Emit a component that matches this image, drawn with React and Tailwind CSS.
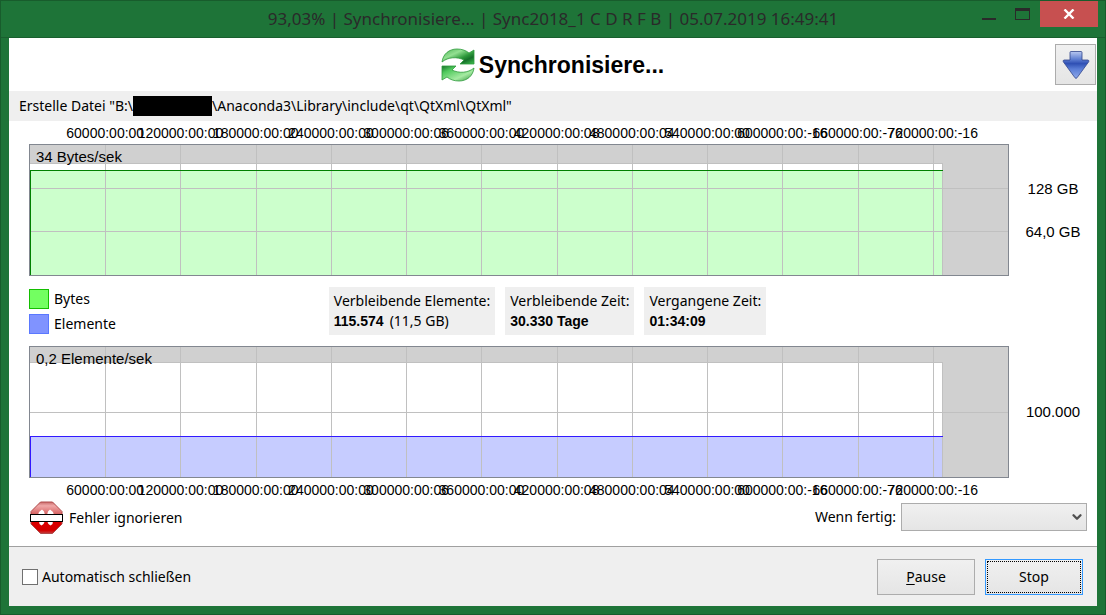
import { ChevronDown } from "lucide-react";

const ticks = [
  "60000:00:00",
  "120000:00:00",
  "180000:00:00",
  "240000:00:00",
  "300000:00:06",
  "360000:00:00",
  "420000:00:08",
  "480000:00:04",
  "540000:00:00",
  "600000:00:-16",
  "660000:00:-76",
  "720000:00:-16",
];

const infos = [
  { label: "Verbleibende Elemente:", value: "115.574", extra: "(11,5 GB)" },
  { label: "Verbleibende Zeit:", value: "30.330 Tage" },
  { label: "Vergangene Zeit:", value: "01:34:09" },
];

const tickX = (idx) => `${((idx + 1) * 100) / 13}%`;
const PROGRESS = "93.3%";

function SyncIcon() {
  return (
    <svg className="w-[34px] h-[34px]" viewBox="0 0 34 34" aria-hidden="true">
      <defs>
        <linearGradient id="syncTop" x1="0" y1="0" x2="1" y2="1">
          <stop offset="0" stopColor="#48b050" />
          <stop offset="0.35" stopColor="#93e092" />
          <stop offset="0.6" stopColor="#2f9a3c" />
          <stop offset="0.75" stopColor="#17702a" />
          <stop offset="1" stopColor="#3fc350" />
        </linearGradient>
        <linearGradient id="syncBottom" x1="0" y1="0" x2="1" y2="1">
          <stop offset="0" stopColor="#17702a" />
          <stop offset="0.25" stopColor="#4fc95c" />
          <stop offset="0.65" stopColor="#a5eaa2" />
          <stop offset="1" stopColor="#2c9138" />
        </linearGradient>
      </defs>
      <path
        d="M1 14C2 6 8 1 16 1c5 0 9 1.500 12 4l5-3v14H19l4-4C16 8.500 7 9 1 14z"
        fill="url(#syncTop)"
        stroke="#2f9a3c"
        strokeWidth="0.8"
      />
      <path
        d="M33 20C32 28 26 33 18 33c-5 0-9-1.500-12-4l-5 3V18h14l-4 4C18 25.500 27 25 33 20z"
        fill="url(#syncBottom)"
        stroke="#2f9a3c"
        strokeWidth="0.8"
      />
    </svg>
  );
}

function ArrowIcon() {
  return (
    <svg className="w-7 h-7" viewBox="0 0 28 28" aria-hidden="true">
      <defs>
        <linearGradient id="arrow" x1="0" y1="0" x2="0" y2="1">
          <stop offset="0" stopColor="#b9c8f0" />
          <stop offset="0.3" stopColor="#5b7bd0" />
          <stop offset="0.45" stopColor="#2f50b4" />
          <stop offset="0.65" stopColor="#5a7dd6" />
          <stop offset="1" stopColor="#8ea9ea" />
        </linearGradient>
      </defs>
      <path
        d="M9 .5h10q1 0 1 1V9h6q1.500.5.700 1.800L15 26.800q-1 1.200-2 0L1.300 10.800Q.5 9.500 2 9h6V1.500q0-1 1-1z"
        fill="url(#arrow)"
        stroke="#31458c"
        strokeWidth="0.8"
      />
    </svg>
  );
}

function IgnoreIcon() {
  return (
    <svg className="w-[34px] h-[34px]" viewBox="0 0 34 34" aria-hidden="true">
      <defs>
        <linearGradient id="stopSign" x1="0" y1="0" x2="0" y2="1">
          <stop offset="0" stopColor="#c96a6a" />
          <stop offset="0.12" stopColor="#f0a8a8" />
          <stop offset="0.45" stopColor="#d05050" />
          <stop offset="0.65" stopColor="#dc0000" />
          <stop offset="0.9" stopColor="#d40000" />
          <stop offset="1" stopColor="#c04040" />
        </linearGradient>
      </defs>
      <path
        d="M11.500 1h12l9.500 9.500V23l-9.500 9.500h-12L2 23V10.500z"
        fill="url(#stopSign)"
        stroke="#b04a4a"
        strokeWidth="1"
      />
      <g fill="#fff">
        <path d="M9 14l1-3 3-2.500 2 2 1 3.500zM18 14l1-3.500 2-2 3 2.500 1 3z" />
        <path d="M10 20h6l-1.500 3-2 1.500-2-1.500zM18 20h6l-.5 3-2 1.500-2-1.500z" />
      </g>
      <rect x="1.500" y="13.500" width="32" height="7" fill="#fff" stroke="#000" strokeWidth="1" />
    </svg>
  );
}

function TimeAxis() {
  return (
    <svg className="block w-full h-[23px] px-px overflow-visible" fontSize="14" fill="#000">
      {ticks.map((tick, idx) => (
        <text key={idx} x={tickX(idx)} y="17" textAnchor="middle">
          {tick}
        </text>
      ))}
    </svg>
  );
}

function Chart({ title, top, level, gridLines, fill, stroke }) {
  return (
    <div className="h-[132px] border border-[#828790] bg-[#d0d0d0]">
      <svg className="block w-full h-[130px]" shapeRendering="crispEdges">
        <rect x="0" y={top} width={PROGRESS} height={130 - top} fill="#fff" />
        <rect x="0" y={level} width={PROGRESS} height={130 - level} fill={fill} />
        <g fill="#c0c0c0">
          <rect x="0" y={top} width={PROGRESS} height="1" />
          <rect x={PROGRESS} y={top} width="1" height={130 - top} />
          {gridLines.map((y) => (
            <rect key={y} x="0" y={y} width="100%" height="1" />
          ))}
          {ticks.map((tick, idx) => (
            <rect key={idx} x={tickX(idx)} y="0" width="1" height="130" />
          ))}
        </g>
        <rect x="0" y={level} width="93.4%" height="1" fill={stroke} />
        <rect x="0" y={level} width="1" height={130 - level} fill={stroke} />
        <text x="6" y="17" fontSize="15" fill="#000">
          {title}
        </text>
      </svg>
    </div>
  );
}

function TitleBar() {
  return (
    <header className="grid grid-cols-[1fr_auto_1fr] h-[37px] px-[7px] border-b border-[#195f2e]">
      <h1 className="col-start-2 pt-1 text-[17px] leading-7 text-[#2a2a2a] whitespace-nowrap">
        93,03% | Synchronisiere... | Sync2018_1 C D R F B | 05.07.2019 16:49:41
      </h1>
      <div className="flex justify-end items-start">
        <button aria-label="Minimieren" className="flex justify-center items-end w-8 h-[19px]">
          <span className="w-3.5 h-0.5 bg-[#2a2a2a]" />
        </button>
        <button aria-label="Maximieren" className="flex justify-center items-end w-[34px] h-[19px]">
          <span className="w-[15px] h-3 border border-t-[3px] border-[#2a2a2a]" />
        </button>
        <button aria-label="Schließen" className="flex justify-center items-center ml-px w-[58px] h-[26px] bg-[#c75050]">
          <svg className="w-3 h-[10px]" viewBox="0 0 12 10" aria-hidden="true">
            <path d="M1.500.5l9 9M10.500.5l-9 9" stroke="#fff" strokeWidth="2.400" />
          </svg>
        </button>
      </div>
    </header>
  );
}

export default function App() {
  return (
    <div className="flex flex-col min-h-screen bg-[#1e7438] border border-[#185c2c] text-black font-['Noto_Sans',sans-serif] text-[14px] leading-5">
      <TitleBar />

      <main className="flex flex-col flex-1 mx-2 mb-2 bg-white">
        <div className="grid grid-cols-[1fr_auto_1fr] items-center h-[53px] pr-px">
          <div className="col-start-2 flex items-center gap-1">
            <SyncIcon />
            <h2 className="text-[23px] leading-8 font-bold font-['Liberation_Sans',sans-serif]">Synchronisiere...</h2>
          </div>
          <button
            aria-label="Minimieren in den Infobereich"
            className="justify-self-end flex justify-center items-center w-[41px] h-[41px] border border-[#acacac] bg-linear-to-b from-[#f0f0f0] to-[#e5e5e5]"
          >
            <ArrowIcon />
          </button>
        </div>

        <p className="flex items-center h-[30px] px-2.5 bg-[#efefef] whitespace-nowrap">
          Erstelle Datei "B:\
          <span className="w-[79px] h-5 bg-black" />
          \Anaconda3\Library\include\qt\QtXml\QtXml"
        </p>

        <section className="flex pl-5 font-['Liberation_Sans',sans-serif]">
          <div className="flex-1">
            <TimeAxis />
            <Chart title="34 Bytes/sek" top={18} level={25} gridLines={[43, 86]} fill="#ccffcc" stroke="#008000" />
          </div>
          <div className="flex flex-col items-center gap-[23px] w-[88px] pt-[58px] text-[15px]">
            <span>128 GB</span>
            <span>64,0 GB</span>
          </div>
        </section>

        <section className="grid grid-cols-[1fr_auto_1fr] items-center h-[70px] pl-5 pr-[31px]">
          <ul className="flex flex-col gap-[5px]">
            <li className="flex items-center gap-[5px]">
              <span className="w-5 h-5 border border-[#14be00] bg-[#73ff61]" />
              Bytes
            </li>
            <li className="flex items-center gap-[5px]">
              <span className="w-5 h-5 border border-[#5a78ff] bg-[#8093ff]" />
              Elemente
            </li>
          </ul>
          <dl className="flex items-center gap-2.5 whitespace-nowrap">
            {infos.map((info) => (
              <div key={info.label} className="px-[5px] py-1 bg-[#efefef]">
                <dt>{info.label}</dt>
                <dd>
                  <b className="font-['Liberation_Sans',sans-serif]">{info.value}</b>
                  {info.extra && <span className="ml-1.5">{info.extra}</span>}
                </dd>
              </div>
            ))}
          </dl>
        </section>

        <section className="flex pl-5 font-['Liberation_Sans',sans-serif]">
          <div className="flex-1">
            <Chart title="0,2 Elemente/sek" top={15} level={89} gridLines={[65]} fill="#c6ccff" stroke="#3219ff" />
            <TimeAxis />
          </div>
          <div className="flex flex-col items-center w-[88px] pt-14 text-[15px]">
            <span>100.000</span>
          </div>
        </section>

        <section className="flex justify-between items-start h-[45px] pl-5 pr-2.5">
          <div className="flex items-center gap-1.5">
            <IgnoreIcon />
            Fehler ignorieren
          </div>
          <div className="flex items-center gap-[5px] pt-0.5">
            <label htmlFor="whenDone">Wenn fertig:</label>
            <div className="relative">
              <select
                id="whenDone"
                className="block appearance-none w-[186px] h-7 border border-[#acacac] bg-linear-to-b from-[#f0f0f0] to-[#e5e5e5]"
              />
              <ChevronDown
                className="absolute right-[3px] top-[7px] w-3.5 h-3.5 text-[#505050] pointer-events-none"
                strokeWidth={4}
              />
            </div>
          </div>
        </section>

        <footer className="flex flex-1 justify-between items-center pl-[13px] pr-3.5 border-t border-[#a0a0a0] bg-[#efefef]">
          <label className="flex items-center gap-1">
            <input type="checkbox" className="appearance-none w-4 h-4 border border-[#707070] bg-white" />
            Automatisch schließen
          </label>
          <div className="flex gap-2.5">
            <button className="w-[98px] h-9 border border-[#acacac] bg-linear-to-b from-[#f0f0f0] to-[#e5e5e5]">
              <u className="underline-offset-2">P</u>ause
            </button>
            <button className="w-[98px] h-9 p-px border border-[#3399ff] bg-linear-to-b from-[#f0f0f0] to-[#e5e5e5]">
              <span className="flex justify-center items-center w-full h-full border border-dotted border-black">Stop</span>
            </button>
          </div>
        </footer>
      </main>
    </div>
  );
}
